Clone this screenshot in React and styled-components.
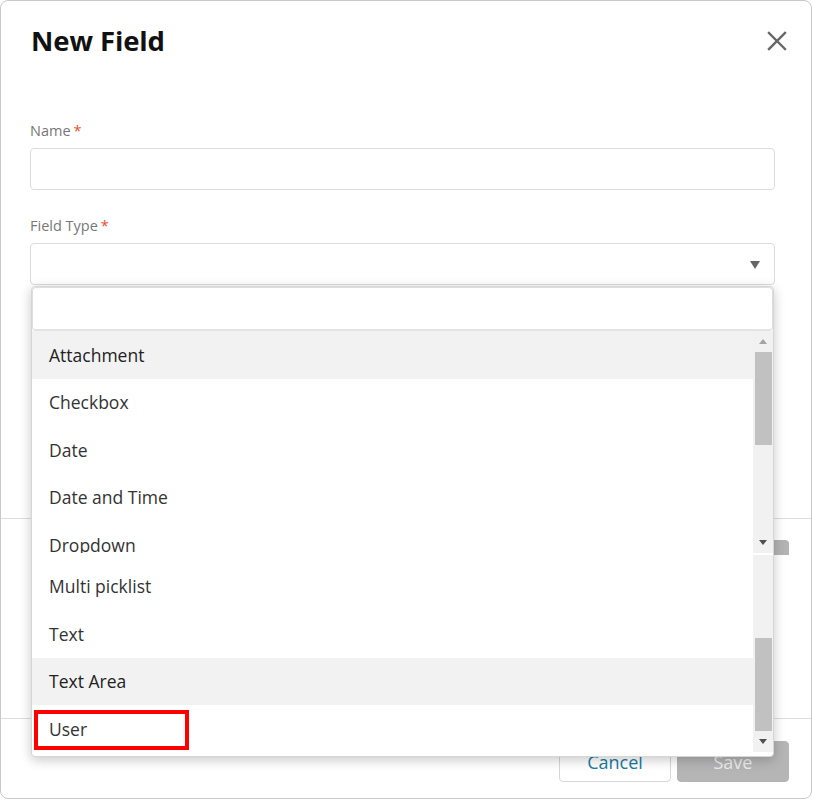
import React from "react";
import styled, { createGlobalStyle } from "styled-components";

const GlobalStyle = createGlobalStyle`
  * { box-sizing: border-box; }
  body {
    margin: 0;
    background: #ffffff;
    font-family: "Open Sans", "Noto Sans", Arial, sans-serif;
  }
`;

const Modal = styled.div`
  position: relative;
  display: flex;
  flex-direction: column;
  width: 812px;
  height: 799px;
  background: #ffffff;
  border: 1px solid #c9c9c9;
  border-radius: 8px;
  overflow: hidden;
`;

const Header = styled.div`
  display: flex;
  align-items: center;
  justify-content: space-between;
  height: 80px;
  padding: 0 24px 0 30px;
`;

const Title = styled.h2`
  margin: 0;
  font-size: 27.5px;
  line-height: 36px;
  font-weight: 700;
  color: #111111;
  letter-spacing: -0.1px;
`;

const CloseButton = styled.button`
  display: flex;
  padding: 0;
  border: none;
  background: none;
  cursor: pointer;
`;

const Body = styled.div`
  padding: 40px 36px 0 29px;
`;

const FieldGroup = styled.div`
  margin-bottom: ${({ $last }) => ($last ? "0" : "26px")};
`;

const Label = styled.div`
  font-size: 14.5px;
  line-height: 20px;
  height: 19px;
  color: #777777;
  margin-bottom: 8px;
`;

const Star = styled.span`
  color: #e5502a;
  margin-left: 3px;
`;

const Input = styled.div`
  position: relative;
  height: 42px;
  border: 1px solid #dcdcdc;
  border-radius: 4px;
  background: #ffffff;
`;

const SelectArrow = styled.span`
  position: absolute;
  right: 14px;
  top: 17px;
  width: 0;
  height: 0;
  border-left: 5.5px solid transparent;
  border-right: 5.5px solid transparent;
  border-top: 8px solid #666666;
`;

const StaleFooter = styled.div`
  display: flex;
  justify-content: flex-end;
  margin-top: 233px;
  padding: 21px 22px 0 0;
  border-top: 1px solid #dddddd;
`;

const StaleButton = styled.div`
  width: 112px;
  height: 15px;
  background: #b3b3b3;
  border-top-right-radius: 4px;
`;

const Footer = styled.div`
  display: flex;
  justify-content: flex-end;
  gap: 6px;
  margin-top: auto;
  padding: 22px 22px 16px 0;
  border-top: 1px solid #dddddd;
`;

const Button = styled.button`
  width: 112px;
  height: 41px;
  border-radius: 4px;
  font-family: inherit;
  font-size: 18px;
  border: 1px solid ${({ $primary }) => ($primary ? "#b5b5b5" : "#d6d6d6")};
  background: ${({ $primary }) => ($primary ? "#b5b5b5" : "#ffffff")};
  color: ${({ $primary }) => ($primary ? "#ececec" : "#1b7aa1")};
`;

const Dropdown = styled.div`
  position: absolute;
  top: 285px;
  left: 30px;
  width: 743px;
  padding-bottom: 4px;
  background: #ffffff;
  border: 1px solid #d6d6d6;
  border-radius: 4px;
  box-shadow: 0 3px 12px rgba(0, 0, 0, 0.22);
`;

const Search = styled.div`
  height: 44px;
  border: 1px solid #dedede;
  border-bottom: 2px solid #e3e3e3;
  border-radius: 4px;
`;

const Pane = styled.div`
  display: flex;
  height: ${({ $height }) => $height}px;
  margin-top: ${({ $gap }) => $gap || 0}px;
  overflow: hidden;
`;

const List = styled.div`
  flex: 1;
  padding-top: ${({ $lead }) => $lead || 0}px;
`;

const Item = styled.div`
  position: relative;
  display: flex;
  align-items: center;
  height: 47.5px;
  padding-left: 17px;
  font-size: 17.5px;
  color: ${({ $active }) => ($active ? "#222222" : "#333333")};
  background: ${({ $active }) => ($active ? "#f2f2f2" : "#ffffff")};
`;

const Marker = styled.span`
  position: absolute;
  left: 2px;
  top: 4.5px;
  width: 155px;
  height: 40px;
  border: 4px solid #ff0000;
`;

const Track = styled.div`
  display: flex;
  flex-direction: column;
  align-items: center;
  width: 20px;
  background: #f1f1f1;
`;

const ArrowSlot = styled.div`
  display: flex;
  align-items: center;
  justify-content: center;
  height: ${({ $size }) => $size}px;
  margin-top: ${({ $push }) => ($push ? "auto" : "0")};
  flex-shrink: 0;
`;

const UpArrow = styled.span`
  width: 0;
  height: 0;
  border-left: 4.5px solid transparent;
  border-right: 4.5px solid transparent;
  border-bottom: 5px solid #a3a3a3;
`;

const DownArrow = styled.span`
  width: 0;
  height: 0;
  border-left: 4.5px solid transparent;
  border-right: 4.5px solid transparent;
  border-top: 5px solid #505050;
`;

const Thumb = styled.div`
  width: 17px;
  height: ${({ $size }) => $size}px;
  margin-top: ${({ $offset }) => $offset}px;
  margin-left: 1px;
  background: #c1c1c1;
  flex-shrink: 0;
`;

const types = [
  "Attachment",
  "Checkbox",
  "Date",
  "Date and Time",
  "Dropdown",
  "Multi picklist",
  "Text",
  "Text Area",
  "User",
];

// each pane only renders the rows that show through its window
const ListPane = ({ items, height, gap, lead, active, showUp, thumbOffset }) => (
  <Pane $height={height} $gap={gap}>
    <List $lead={lead}>
      {items.map(t => (
        <Item key={t} $active={t === active}>
          {t}
          {t === "User" && <Marker />}
        </Item>
      ))}
    </List>
    <Track>
      {showUp && (
        <ArrowSlot $size={21}>
          <UpArrow />
        </ArrowSlot>
      )}
      <Thumb $size={93} $offset={thumbOffset} />
      <ArrowSlot $size={21} $push>
        <DownArrow />
      </ArrowSlot>
    </Track>
  </Pane>
);

const App = () => {
  return (
    <>
      <GlobalStyle />
      <Modal>
        <Header>
          <Title>New Field</Title>
          <CloseButton aria-label="Close">
            <svg width="20" height="20" viewBox="0 0 20 20">
              <path
                d="M2 2 L18 18 M18 2 L2 18"
                stroke="#666666"
                strokeWidth="2.4"
                strokeLinecap="square"
              />
            </svg>
          </CloseButton>
        </Header>
        <Body>
          <FieldGroup>
            <Label>
              Name<Star>*</Star>
            </Label>
            <Input />
          </FieldGroup>
          <FieldGroup $last>
            <Label>
              Field Type<Star>*</Star>
            </Label>
            <Input>
              <SelectArrow />
            </Input>
          </FieldGroup>
        </Body>
        <StaleFooter>
          <StaleButton />
        </StaleFooter>
        <Footer>
          <Button>Cancel</Button>
          <Button $primary>Save</Button>
        </Footer>
        <Dropdown>
          <Search />
          <ListPane
            items={types.slice(0, 5)}
            height={222}
            active="Attachment"
            showUp
            thumbOffset={0}
          />
          <ListPane
            items={types.slice(5)}
            height={197}
            gap={2}
            lead={7.5}
            active="Text Area"
            thumbOffset={83}
          />
        </Dropdown>
      </Modal>
    </>
  );
};

export default App;
